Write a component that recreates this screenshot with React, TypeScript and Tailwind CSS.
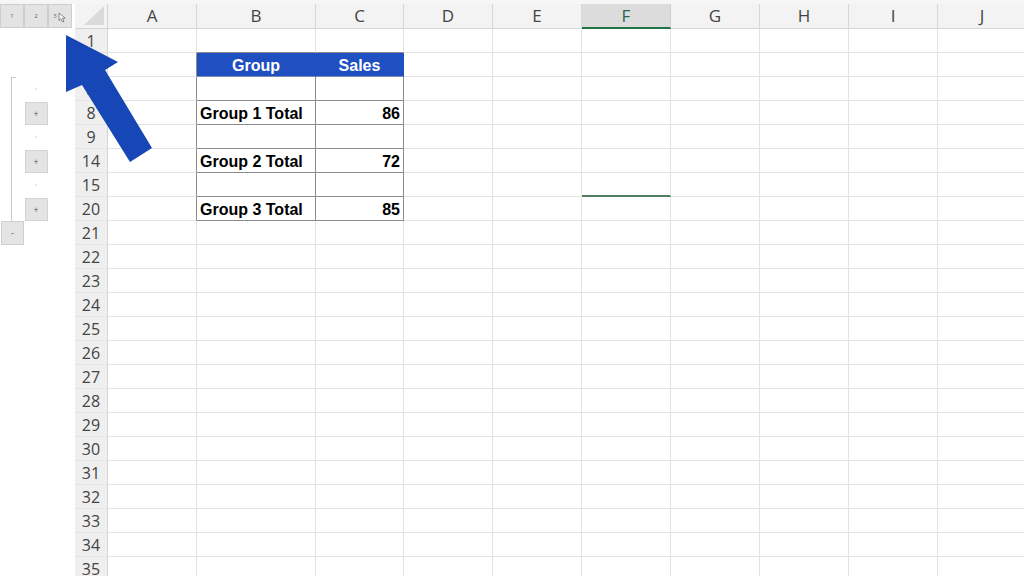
import React from 'react';

type Col = { l: string; w: string };
const COLS: Col[] = [
  { l: 'A', w: 'w-[89px]' },
  { l: 'B', w: 'w-[119px]' },
  { l: 'C', w: 'w-[88px]' },
  { l: 'D', w: 'w-[89px]' },
  { l: 'E', w: 'w-[89px]' },
  { l: 'F', w: 'w-[89px]' },
  { l: 'G', w: 'w-[89px]' },
  { l: 'H', w: 'w-[89px]' },
  { l: 'I', w: 'w-[89px]' },
  { l: 'J', w: 'w-[89px]' },
];

type Row = {
  n: number;
  g: 'none' | 'dot' | 'plus' | 'minus';
  line?: boolean;
  tick?: boolean;
  kind?: 'top' | 'head' | 'body';
  b?: string;
  c?: string;
  green?: boolean;
};

const ROWS: Row[] = [
  { n: 1, g: 'none', kind: 'top' },
  { n: 2, g: 'none', kind: 'head', b: 'Group', c: 'Sales' },
  { n: 3, g: 'dot', line: true, tick: true, kind: 'body' },
  { n: 8, g: 'plus', line: true, kind: 'body', b: 'Group 1 Total', c: '86' },
  { n: 9, g: 'dot', line: true, kind: 'body' },
  { n: 14, g: 'plus', line: true, kind: 'body', b: 'Group 2 Total', c: '72' },
  { n: 15, g: 'dot', line: true, kind: 'body', green: true },
  { n: 20, g: 'plus', line: true, kind: 'body', b: 'Group 3 Total', c: '85' },
  ...Array.from({ length: 15 }, (_, i) => ({ n: 21 + i, g: (i === 0 ? 'minus' : 'none') as Row['g'] })),
];

const headFont = { fontFamily: '"Open Sans", "Noto Sans", sans-serif' };
const cellFont = { fontFamily: '"Liberation Sans", Arial, sans-serif' };

function Gutter({ r }: { r: Row }) {
  return (
    <div className="flex h-full w-[75px] shrink-0 bg-white">
      <div className="flex h-full w-[24px] shrink-0 items-center">
        {r.g === 'minus' ? (
          <div className="ml-[1px] flex h-[24px] w-[24px] items-center justify-center border border-[#cfcfcf] bg-[#e4e4e4] text-[8px] leading-none text-[#555]">
            -
          </div>
        ) : r.line ? (
          <div className="flex h-full items-start">
            <div className="ml-[11px] h-full w-px bg-[#c9c9c9]" />
            {r.tick && <div className="h-px w-[4px] bg-[#c9c9c9]" />}
          </div>
        ) : null}
      </div>
      <div className="flex h-full w-[24px] shrink-0 items-center justify-center">
        {r.g === 'plus' && (
          <div className="mt-px flex h-[23px] w-[23px] items-center justify-center border border-[#d2d2d2] bg-[#e4e4e4] text-[8px] leading-none text-[#555]">
            +
          </div>
        )}
        {r.g === 'dot' && <div className="h-[2px] w-[2px] rounded-full bg-[#dcdcdc]" />}
      </div>
    </div>
  );
}

function Cell({ r, col, idx }: { r: Row; col: Col; idx: number }) {
  const inTable = r.kind === 'head' || r.kind === 'body';
  const isB = idx === 1;
  const isC = idx === 2;
  let cls = `${col.w} h-full shrink-0 border-r border-b flex items-center overflow-hidden `;
  let content: React.ReactNode = null;

  if (inTable && (isB || isC)) {
    if (r.kind === 'head') {
      cls += 'bg-[#1f4fc0] border-r-[#1f4fc0] border-b-[#7b8bb0] justify-center text-white font-bold text-[16px] pt-[3px]';
      content = isB ? r.b : r.c;
    } else {
      cls += 'bg-white border-[#8c8c8c] font-bold text-[16px] text-black pt-[2px] ';
      cls += isB ? 'justify-start pl-[3px]' : 'justify-end pr-[3px]';
      content = isB ? r.b : r.c;
    }
  } else if (r.kind === 'top' && (isB || isC)) {
    cls += 'border-r-[#e2e2e2] border-b-[#8c8c8c]';
  } else if (inTable && idx === 0) {
    cls += 'border-b-[#e2e2e2] border-r-[#8c8c8c]';
  } else if (r.green && idx === 5) {
    cls += 'border-r-[#e2e2e2] border-b-2 border-b-[#4f7f63]';
  } else {
    cls += 'border-[#e2e2e2]';
  }
  return (
    <div className={cls} style={cellFont}>
      <span className="leading-none">{content}</span>
    </div>
  );
}

function Cursor() {
  return (
    <svg width="9" height="11" viewBox="0 0 9 11" className="ml-[1px] mt-[3px]">
      <path d="M1 1 L1 8.5 L3 6.8 L4.6 10 L6 9.3 L4.5 6.2 L7.2 6.2 Z" fill="#fff" stroke="#6a6a6a" strokeWidth="0.8" strokeLinejoin="round" />
    </svg>
  );
}

export default function App() {
  return (
    <div className="relative h-[576px] w-[1024px] overflow-hidden bg-white">
      <div className="h-[4px] w-full bg-[#f6f6f6]" />
      {/* header row */}
      <div className="flex h-[25px] w-full">
        <div className="flex h-full w-[75px] shrink-0 items-start bg-white">
          {['1', '2', '3'].map((t) => (
            <div
              key={t}
              className="flex h-[24px] w-[24px] shrink-0 items-center justify-center border border-[#cdcdcd] bg-[#e3e3e3] text-[6px] leading-none text-[#666]"
              style={headFont}
            >
              <span>{t}</span>
              {t === '3' && <Cursor />}
            </div>
          ))}
        </div>
        <div className="flex h-full w-[33px] shrink-0 items-end justify-end border-b border-r border-[#d4d4d4] bg-[#f3f3f3] pb-[3px] pr-[3px]">
          <svg width="20" height="19" viewBox="0 0 20 19">
            <polygon points="20,0 20,19 0,19" fill="#dadada" />
          </svg>
        </div>
        <div className="flex h-full overflow-hidden">
          {COLS.map((c) => (
            <div
              key={c.l}
              className={`${c.w} flex h-full shrink-0 items-center justify-center border-r text-[17px] ${
                c.l === 'F'
                  ? 'border-r-[#cfcfcf] border-b-2 border-b-[#217346] bg-[#dcdcdc] text-[#2d6647]'
                  : 'border-b border-[#d8d8d8] bg-[#f3f3f3] text-[#444]'
              }`}
              style={headFont}
            >
              {c.l}
            </div>
          ))}
        </div>
      </div>
      {/* rows */}
      {ROWS.map((r) => (
        <div key={r.n} className="flex h-[24px] w-full">
          <Gutter r={r} />
          <div
            className="flex h-full w-[33px] shrink-0 items-center justify-center border-b border-r border-b-[#e4e4e4] border-r-[#d4d4d4] bg-[#efefef] text-[16px] text-[#444]"
            style={headFont}
          >
            {r.n}
          </div>
          <div className="flex h-full overflow-hidden">
            {COLS.map((c, i) => (
              <Cell key={c.l} r={r} col={c} idx={i} />
            ))}
          </div>
        </div>
      ))}
      {/* pointing arrow overlay */}
      <svg className="pointer-events-none absolute left-0 top-0" width="1024" height="576" viewBox="0 0 1024 576">
        <polygon points="66,35 118,62 105,70 152,148 130,162 82,85 66,92" fill="#1747b6" />
      </svg>
    </div>
  );
}
